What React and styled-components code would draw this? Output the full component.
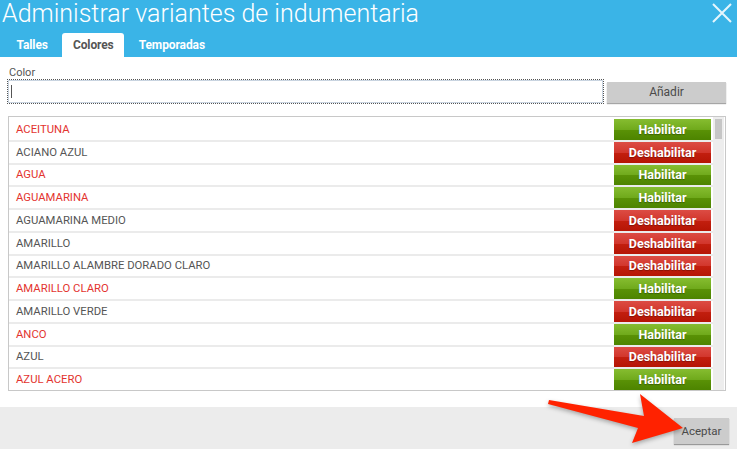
import styled, { createGlobalStyle } from "styled-components";

const GlobalStyle = createGlobalStyle`
  html, body {
    margin: 0;
    padding: 0;
    background: #ffffff;
    font-family: Roboto, "Liberation Sans", sans-serif;
  }
`;

const Dialog = styled.div`
  position: relative;
  width: 737px;
  height: 449px;
  display: flex;
  flex-direction: column;
  background: #fff;
  overflow: hidden;
`;

const Header = styled.div`
  background: #3ab4e7;
  height: 57px;
  display: flex;
  flex-direction: column;
  justify-content: space-between;
`;

const TitleRow = styled.div`
  display: flex;
  justify-content: space-between;
  align-items: flex-start;
`;

const Title = styled.h1`
  margin: 0;
  padding: 0 0 0 2px;
  font-size: 25px;
  line-height: 28px;
  font-weight: 300;
  color: #fff;
`;

const Close = styled.button`
  border: 0;
  background: none;
  padding: 0;
  margin: 3px 4px 0 0;
  width: 22px;
  height: 20px;
`;

const Tabs = styled.div`
  display: flex;
  gap: 4px;
  padding-left: 6px;
`;

const Tab = styled.div`
  height: 24px;
  padding: 0 10.5px;
  display: flex;
  align-items: center;
  font-size: 12px;
  font-weight: 700;
  letter-spacing: -0.1px;
  border-radius: 3px 3px 0 0;
  color: ${(p) => (p.$active ? "#555" : "#fff")};
  background: ${(p) => (p.$active ? "#fff" : "transparent")};
`;

const Body = styled.div`
  flex: 1;
  padding: 9px 11px 0 8px;
  display: flex;
  flex-direction: column;
`;

const Label = styled.label`
  font-size: 11px;
  color: #555;
  line-height: 13px;
  margin-left: 1px;
`;

const AddRow = styled.div`
  display: flex;
  align-items: center;
  gap: 3px;
  margin-left: -1px;
`;

const Input = styled.div`
  flex: 1;
  height: 23px;
  border: 1px dotted #555;
  outline: 1px solid #c9d4e0;
  outline-offset: -2px;
  display: flex;
  align-items: center;
  padding-left: 3px;
`;

const Caret = styled.span`
  width: 1px;
  height: 13px;
  background: #555;
`;

const GrayButton = styled.button`
  border: 0;
  background: #cccccc;
  box-shadow: 0 1px 1px rgba(0, 0, 0, 0.35);
  color: #4a4a4a;
  font-family: Roboto, "Liberation Sans", sans-serif;
  font-size: 12px;
  padding: 0;
`;

const AddButton = styled(GrayButton)`
  width: 119px;
  height: 21px;
  margin-top: 1px;
`;

const List = styled.div`
  margin-top: 12px;
  height: 273px;
  border: 1px solid #c8c8c8;
  display: flex;
`;

const Rows = styled.div`
  flex: 1;
  display: flex;
  flex-direction: column;
  padding-top: 2px;
`;

const Row = styled.div`
  height: ${(p) => (p.$last ? "20.75px" : "22.75px")};
  box-sizing: border-box;
  display: flex;
  align-items: center;
  justify-content: space-between;
  border-bottom: ${(p) => (p.$last ? "none" : "2px solid #ebebeb")};
  padding: 0 2px 0 7px;
  font-size: 11.3px;
  color: ${(p) => (p.$red ? "#e3342f" : "#555")};
`;

const Toggle = styled.button`
  width: 97px;
  height: 20.75px;
  border: 0;
  padding: 0;
  color: #fff;
  font-family: Roboto, "Liberation Sans", sans-serif;
  font-size: 12.5px;
  font-weight: 700;
  text-shadow: 0 1px 1px rgba(0, 0, 0, 0.3);
  background: ${(p) =>
    p.$on
      ? "linear-gradient(#86bd30 0%, #70aa1c 50%, #5a9206 51%, #4d8400 100%)"
      : "linear-gradient(#dc4c44 0%, #d2362c 50%, #c31f0f 51%, #b51505 100%)"};
`;

const Scrollbar = styled.div`
  width: 11px;
  margin-right: 1px;
  background: #ededed;
  display: flex;
  flex-direction: column;
  padding-top: 2px;
`;

const Thumb = styled.div`
  height: 20px;
  margin: 0 2px;
  background: #c6c6c6;
`;

const Footer = styled.div`
  height: 42px;
  background: #ececec;
  display: flex;
  justify-content: flex-end;
  align-items: flex-start;
  padding: 11px 8px 0 0;
  box-sizing: border-box;
`;

const AcceptButton = styled(GrayButton)`
  width: 55px;
  height: 26px;
  font-size: 11.5px;
`;

const Arrow = styled.svg`
  position: absolute;
  left: 540px;
  top: 388px;
  filter: drop-shadow(0 2px 2px rgba(0, 0, 0, 0.3));
`;

const colors = [
  ["ACEITUNA", true],
  ["ACIANO AZUL", false],
  ["AGUA", true],
  ["AGUAMARINA", true],
  ["AGUAMARINA MEDIO", false],
  ["AMARILLO", false],
  ["AMARILLO ALAMBRE DORADO CLARO", false],
  ["AMARILLO CLARO", true],
  ["AMARILLO VERDE", false],
  ["ANCO", true],
  ["AZUL", false],
  ["AZUL ACERO", true],
];

export default function App() {
  return (
    <>
      <GlobalStyle />
      <Dialog>
        <Header>
          <TitleRow>
            <Title>Administrar variantes de indumentaria</Title>
            <Close aria-label="Cerrar">
              <svg width="22" height="20" viewBox="0 0 22 20">
                <path d="M2 1 L20 19 M20 1 L2 19" stroke="#e6f6fd" strokeWidth="2" />
              </svg>
            </Close>
          </TitleRow>
          <Tabs>
            <Tab>Talles</Tab>
            <Tab $active>Colores</Tab>
            <Tab>Temporadas</Tab>
          </Tabs>
        </Header>
        <Body>
          <Label>Color</Label>
          <AddRow>
            <Input>
              <Caret />
            </Input>
            <AddButton>Añadir</AddButton>
          </AddRow>
          <List>
            <Rows>
              {colors.map(([name, red], i) => (
                <Row key={name} $red={red} $last={i === colors.length - 1}>
                  <span>{name}</span>
                  <Toggle $on={red}>{red ? "Habilitar" : "Deshabilitar"}</Toggle>
                </Row>
              ))}
            </Rows>
            <Scrollbar>
              <Thumb />
            </Scrollbar>
          </List>
        </Body>
        <Footer>
          <AcceptButton>Aceptar</AcceptButton>
        </Footer>
        <Arrow width="150" height="62" viewBox="0 0 150 62">
          <polygon
            points="9,12 104,28 100,6 143,40 92,55 98,40 8,16"
            fill="#ff2200"
          />
        </Arrow>
      </Dialog>
    </>
  );
}
